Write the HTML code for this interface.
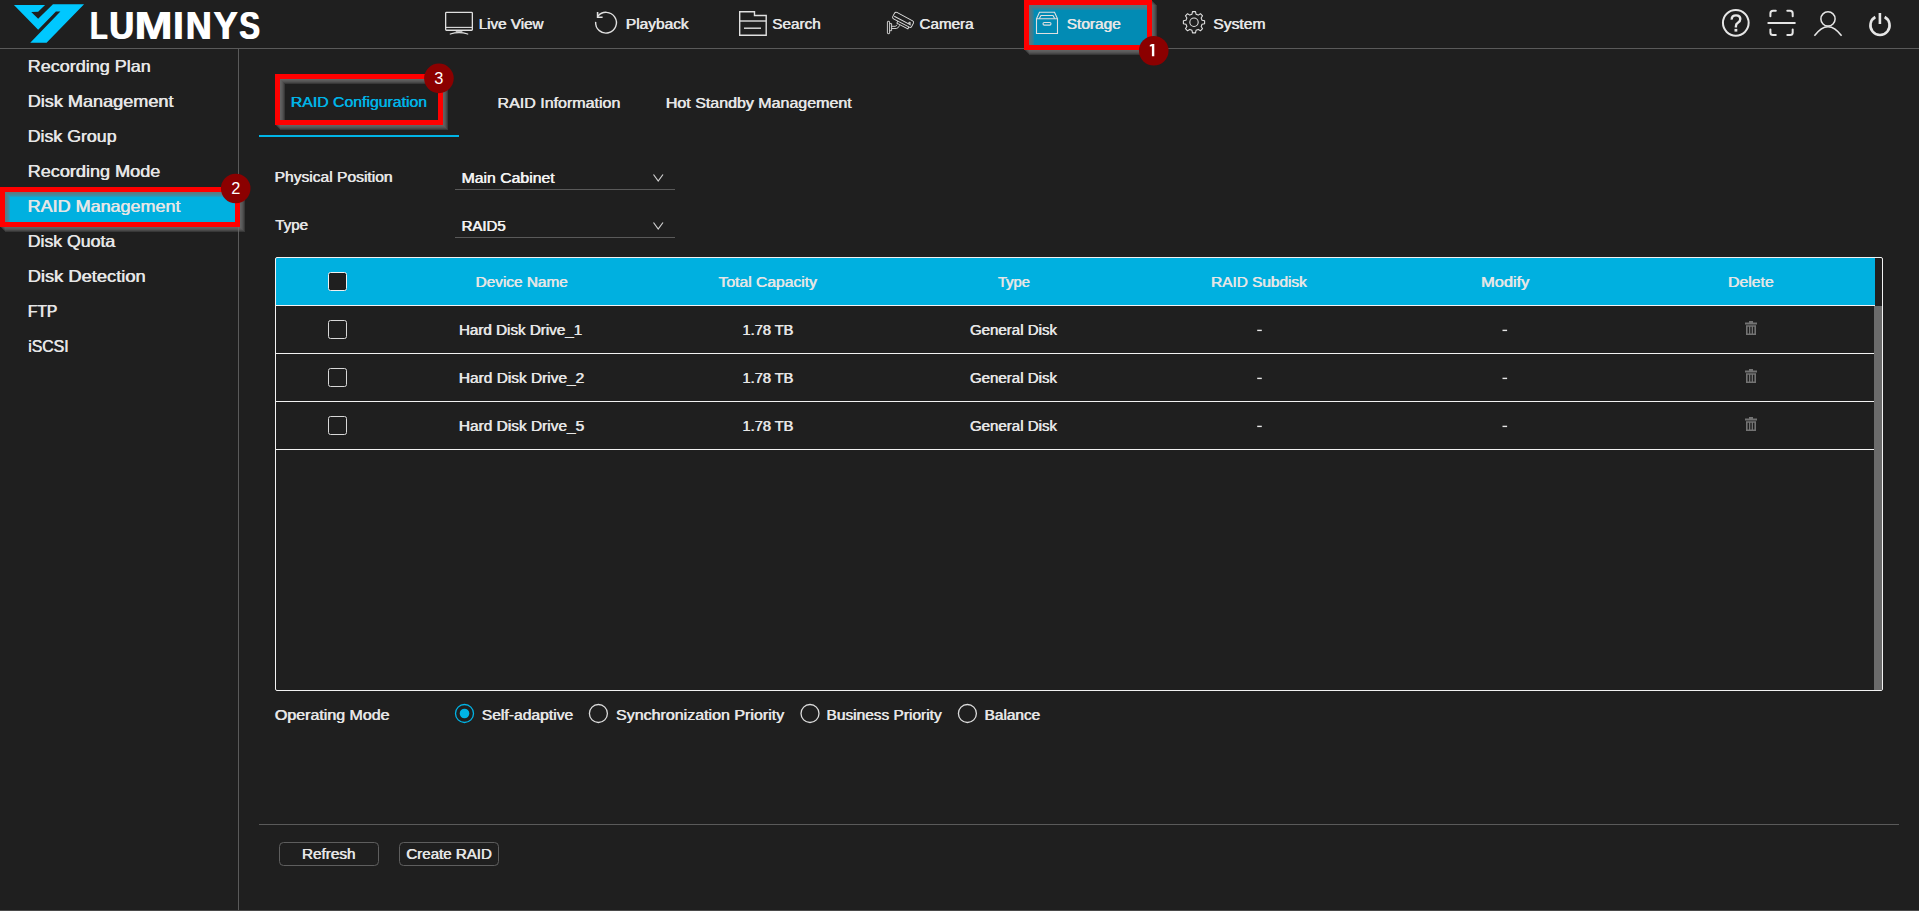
<!DOCTYPE html>
<html><head><meta charset="utf-8"><title>Storage - RAID Management</title>
<style>
html,body{margin:0;padding:0;background:#1f1f1f;overflow:hidden;}
svg{display:block;font-family:"Liberation Sans",sans-serif;}
</style></head>
<body>
<svg width="1919" height="911" viewBox="0 0 1919 911">
<defs>
<filter id="bl" x="-10%" y="-30%" width="130%" height="170%"><feGaussianBlur stdDeviation="0.5"/></filter>
<filter id="sh" x="-10%" y="-30%" width="130%" height="170%">
<feGaussianBlur in="SourceAlpha" stdDeviation="1.3"/>
<feOffset dx="4" dy="4" result="o"/>
<feFlood flood-color="#6a6a6a" flood-opacity="0.9"/>
<feComposite in2="o" operator="in"/>
<feMerge><feMergeNode/><feMergeNode in="SourceGraphic"/></feMerge>
</filter>
</defs>
<rect width="1919" height="911" fill="#1f1f1f"/>

<rect x="0" y="48" width="1919" height="1" fill="#5a5a5a"/>
<rect x="238" y="49" width="1" height="862" fill="#5a5a5a"/>
<rect x="0" y="910" width="1919" height="1" fill="#4a4a4a"/>
<polygon fill="#00c8ff" points="13.95,4.94 45.06,4.94 38.15,11.85 31.23,12.10 38.15,18.77 52.96,4.20 84.07,4.20 46.54,42.72 30.25,42.72 60.37,11.60 55.93,11.60 38.15,29.63"/>
<rect x="1029" y="5" width="118" height="40" fill="#028bb4"/>
<rect x="5" y="192" width="230" height="30" fill="#00b0e0"/>
<rect x="259" y="135" width="200" height="2" fill="#00b4e6"/>
<rect x="455" y="189" width="220" height="1" fill="#5a5a5a"/>
<rect x="455" y="237" width="220" height="1" fill="#5a5a5a"/>
<path d="M653.5 174.5 L658.2 181 L663 174.5" fill="none" stroke="#cfcfcf" stroke-width="1.2"/>
<path d="M653.5 222.5 L658.2 229 L663 222.5" fill="none" stroke="#cfcfcf" stroke-width="1.2"/>
<rect x="276" y="258" width="1599" height="47" fill="#00b0e0"/>
<rect x="275.5" y="257.5" width="1607" height="433" rx="1.5" fill="none" stroke="#f2f2f2" stroke-width="1"/>
<rect x="276" y="305" width="1599" height="1" fill="#f2f2f2"/>
<rect x="276" y="353" width="1599" height="1" fill="#f2f2f2"/>
<rect x="276" y="401" width="1599" height="1" fill="#f2f2f2"/>
<rect x="276" y="449" width="1599" height="1" fill="#f2f2f2"/>
<rect x="1874" y="306" width="8" height="384" fill="#6b6b6b"/>
<rect x="328.5" y="272.5" width="18" height="18" rx="2" fill="#1f1f1f" stroke="#f0f0f0" stroke-width="1"/>
<rect x="328.5" y="320.5" width="18" height="18" rx="2" fill="none" stroke="#d8d8d8" stroke-width="1"/>
<rect x="1257.2" y="329.7" width="4.6" height="1.4" fill="#e6e6e6"/>
<rect x="1502.5" y="329.7" width="4.6" height="1.4" fill="#e6e6e6"/>
<g transform="translate(1745,321)" fill="#737373"><rect x="4" y="0" width="4" height="2"/><rect x="0" y="1.5" width="12" height="2"/><path d="M1 4.2 H11 V14 H1 Z M2.6 5.8 V12.6 H4 V5.8 Z M5.3 5.8 V12.6 H6.7 V5.8 Z M8 5.8 V12.6 H9.4 V5.8 Z" fill-rule="evenodd"/></g>
<rect x="328.5" y="368.5" width="18" height="18" rx="2" fill="none" stroke="#d8d8d8" stroke-width="1"/>
<rect x="1257.2" y="377.7" width="4.6" height="1.4" fill="#e6e6e6"/>
<rect x="1502.5" y="377.7" width="4.6" height="1.4" fill="#e6e6e6"/>
<g transform="translate(1745,369)" fill="#737373"><rect x="4" y="0" width="4" height="2"/><rect x="0" y="1.5" width="12" height="2"/><path d="M1 4.2 H11 V14 H1 Z M2.6 5.8 V12.6 H4 V5.8 Z M5.3 5.8 V12.6 H6.7 V5.8 Z M8 5.8 V12.6 H9.4 V5.8 Z" fill-rule="evenodd"/></g>
<rect x="328.5" y="416.5" width="18" height="18" rx="2" fill="none" stroke="#d8d8d8" stroke-width="1"/>
<rect x="1257.2" y="425.7" width="4.6" height="1.4" fill="#e6e6e6"/>
<rect x="1502.5" y="425.7" width="4.6" height="1.4" fill="#e6e6e6"/>
<g transform="translate(1745,417)" fill="#737373"><rect x="4" y="0" width="4" height="2"/><rect x="0" y="1.5" width="12" height="2"/><path d="M1 4.2 H11 V14 H1 Z M2.6 5.8 V12.6 H4 V5.8 Z M5.3 5.8 V12.6 H6.7 V5.8 Z M8 5.8 V12.6 H9.4 V5.8 Z" fill-rule="evenodd"/></g>
<circle cx="464.5" cy="713.5" r="9" fill="none" stroke="#00b4e6" stroke-width="1.3"/>
<circle cx="464.5" cy="713.5" r="4.8" fill="#00b4e6"/>
<circle cx="598.4" cy="713.5" r="9" fill="none" stroke="#dcdcdc" stroke-width="1.3"/>
<circle cx="810" cy="713.5" r="9" fill="none" stroke="#dcdcdc" stroke-width="1.3"/>
<circle cx="967.4" cy="713.5" r="9" fill="none" stroke="#dcdcdc" stroke-width="1.3"/>
<rect x="259" y="824" width="1640" height="1" fill="#5a5a5a"/>
<rect x="279.5" y="842.5" width="99" height="23" rx="4" fill="none" stroke="#5e5e5e" stroke-width="1"/>
<rect x="399.5" y="842.5" width="99" height="23" rx="4" fill="none" stroke="#5e5e5e" stroke-width="1"/>
<g fill="none" stroke="#e0e0e0" stroke-width="1.3"><rect x="445.65" y="12.45" width="26.7" height="17.8" rx="0.8"/><line x1="446" y1="27.4" x2="472" y2="27.4" stroke-width="1.1"/></g><rect x="455.7" y="30.5" width="6.7" height="1.8" fill="#e0e0e0" opacity="0.8"/><path d="M450.3 34 Q459 31.2 467.7 34" fill="none" stroke="#e0e0e0" stroke-width="1.3" stroke-linecap="round"/>
<g fill="none" stroke="#e0e0e0" stroke-width="1.4"><path d="M595.64 21.89 A10.4 10.4 0 1 0 597.9 16.2"/><path d="M597.6 12 V17.3 H602.6" stroke-width="1.6"/></g>
<g fill="none" stroke="#e0e0e0" stroke-width="1.4"><path d="M739.7 35.2 V11.7 H754.5 V15.5 H766.2 V35.2 Z"/><line x1="739.7" y1="21" x2="766.2" y2="21"/><line x1="744" y1="28.2" x2="761" y2="28.2"/></g>
<g fill="none" stroke="#e0e0e0" stroke-width="0.9"><g transform="translate(1 1) rotate(28 902 19)"><rect x="891.3" y="15.2" width="21.4" height="7.2" rx="1.8"/><line x1="892.5" y1="19.8" x2="911.5" y2="19.8"/><path d="M898 22.4 V24.6 H910.5 V22.4"/><circle cx="909.2" cy="18.6" r="0.8"/></g><rect x="887.4" y="21.3" width="2.2" height="12.4" rx="0.6"/><path d="M889.6 23.6 H891.6 V30.7 H889.6"/><path d="M891.6 28.5 H896.3 Q898.6 28.2 899.6 25.3 M891.6 26.3 H895.2 Q896.5 26 897.2 24.6"/></g>
<g fill="none" stroke="#e0e0e0" stroke-width="1.1"><path d="M1036.5 33.5 V18.8 H1057.5 V33.5 Z"/><path d="M1036.5 18.8 L1039.5 12.3 H1054.5 L1057.5 18.8"/><path d="M1039.3 18.5 L1041 15.5 H1053 L1054.7 18.5"/><rect x="1043" y="22.5" width="8" height="2.6" rx="1.3"/></g>
<g fill="none" stroke="#e0e0e0" stroke-width="1.1"><path d="M1202.04 20.20 L1204.60 20.76 L1204.60 23.74 L1202.04 24.30 L1201.14 26.48 L1202.55 28.69 L1200.44 30.80 L1198.23 29.39 L1196.05 30.29 L1195.49 32.85 L1192.51 32.85 L1191.95 30.29 L1189.77 29.39 L1187.56 30.80 L1185.45 28.69 L1186.86 26.48 L1185.96 24.30 L1183.40 23.74 L1183.40 20.76 L1185.96 20.20 L1186.86 18.02 L1185.45 15.81 L1187.56 13.70 L1189.77 15.11 L1191.95 14.21 L1192.51 11.65 L1195.49 11.65 L1196.05 14.21 L1198.23 15.11 L1200.44 13.70 L1202.55 15.81 L1201.14 18.02 Z" stroke-linejoin="round"/><circle cx="1194" cy="22.25" r="4.2"/></g>
<circle cx="1735.8" cy="22.85" r="12.85" fill="none" stroke="#e6e6e6" stroke-width="2"/>
<path d="M1731.7 19.6 Q1731.6 15.4 1736 15.4 Q1740.3 15.4 1740.3 19.1 Q1740.3 21.4 1737.9 22.7 Q1735.9 23.8 1735.9 26.2 V27.4" fill="none" stroke="#e6e6e6" stroke-width="2.4"/>
<rect x="1734.5" y="28.9" width="2.8" height="2.7" fill="#e6e6e6"/>
<g fill="none" stroke="#e6e6e6" stroke-width="2" stroke-linecap="round"><path d="M1770.4 16.2 V13.4 Q1770.4 10.8 1773 10.8 H1775.8"/><path d="M1787.3 10.8 H1790.1 Q1792.7 10.8 1792.7 13.4 V16.2"/><path d="M1770.4 29.6 V32.5 Q1770.4 35.1 1773 35.1 H1775.8"/><path d="M1787.3 35.1 H1790.1 Q1792.7 35.1 1792.7 32.5 V29.6"/><path d="M1768.3 22.9 H1794.8"/></g>
<g fill="none" stroke="#e6e6e6" stroke-width="1.5"><circle cx="1828" cy="18.9" r="7.1"/><path d="M1814.4 35.8 Q1828 17.6 1841.6 35.8"/></g>
<g fill="none" stroke="#e6e6e6" stroke-width="2.6"><path d="M1875.35 17.0 A9.6 9.6 0 1 0 1884.65 17.0"/><line x1="1879.9" y1="13.0" x2="1879.9" y2="24.0"/></g>
<text x="89.50" y="39" font-size="38" font-weight="bold" fill="#ffffff" textLength="17.44" lengthAdjust="spacingAndGlyphs">L</text><text x="90.70" y="39" font-size="38" font-weight="bold" fill="#ffffff" textLength="17.44" lengthAdjust="spacingAndGlyphs">L</text>
<text x="108.82" y="39" font-size="38" font-weight="bold" fill="#ffffff" textLength="24.71" lengthAdjust="spacingAndGlyphs">U</text><text x="110.02" y="39" font-size="38" font-weight="bold" fill="#ffffff" textLength="24.71" lengthAdjust="spacingAndGlyphs">U</text>
<text x="133.93" y="39" font-size="38" font-weight="bold" fill="#ffffff" textLength="38.07" lengthAdjust="spacingAndGlyphs">M</text><text x="135.13" y="39" font-size="38" font-weight="bold" fill="#ffffff" textLength="38.07" lengthAdjust="spacingAndGlyphs">M</text>
<text x="172.72" y="39" font-size="38" font-weight="bold" fill="#ffffff" textLength="10.14" lengthAdjust="spacingAndGlyphs">I</text><text x="173.92" y="39" font-size="38" font-weight="bold" fill="#ffffff" textLength="10.14" lengthAdjust="spacingAndGlyphs">I</text>
<text x="185.26" y="39" font-size="38" font-weight="bold" fill="#ffffff" textLength="25.78" lengthAdjust="spacingAndGlyphs">N</text><text x="186.46" y="39" font-size="38" font-weight="bold" fill="#ffffff" textLength="25.78" lengthAdjust="spacingAndGlyphs">N</text>
<text x="212.90" y="39" font-size="38" font-weight="bold" fill="#ffffff" textLength="24.32" lengthAdjust="spacingAndGlyphs">Y</text><text x="214.10" y="39" font-size="38" font-weight="bold" fill="#ffffff" textLength="24.32" lengthAdjust="spacingAndGlyphs">Y</text>
<text x="238.77" y="39" font-size="38" font-weight="bold" fill="#ffffff" textLength="20.55" lengthAdjust="spacingAndGlyphs">S</text><text x="239.97" y="39" font-size="38" font-weight="bold" fill="#ffffff" textLength="20.55" lengthAdjust="spacingAndGlyphs">S</text>
<text x="27.40" y="72" font-size="16.5" font-weight="normal" fill="#e6e6e6" textLength="123.01" lengthAdjust="spacingAndGlyphs">Recording Plan</text><text x="28.00" y="72" font-size="16.5" font-weight="normal" fill="#e6e6e6" textLength="123.01" lengthAdjust="spacingAndGlyphs">Recording Plan</text>
<text x="27.42" y="107" font-size="16.5" font-weight="normal" fill="#e6e6e6" textLength="145.81" lengthAdjust="spacingAndGlyphs">Disk Management</text><text x="28.02" y="107" font-size="16.5" font-weight="normal" fill="#e6e6e6" textLength="145.81" lengthAdjust="spacingAndGlyphs">Disk Management</text>
<text x="27.43" y="142" font-size="16.5" font-weight="normal" fill="#e6e6e6" textLength="88.84" lengthAdjust="spacingAndGlyphs">Disk Group</text><text x="28.03" y="142" font-size="16.5" font-weight="normal" fill="#e6e6e6" textLength="88.84" lengthAdjust="spacingAndGlyphs">Disk Group</text>
<text x="27.43" y="177" font-size="16.5" font-weight="normal" fill="#e6e6e6" textLength="132.57" lengthAdjust="spacingAndGlyphs">Recording Mode</text><text x="28.03" y="177" font-size="16.5" font-weight="normal" fill="#e6e6e6" textLength="132.57" lengthAdjust="spacingAndGlyphs">Recording Mode</text>
<text x="27.38" y="212" font-size="16.5" font-weight="normal" fill="#e6e6e6" textLength="152.87" lengthAdjust="spacingAndGlyphs">RAID Management</text><text x="27.98" y="212" font-size="16.5" font-weight="normal" fill="#e6e6e6" textLength="152.87" lengthAdjust="spacingAndGlyphs">RAID Management</text>
<text x="27.43" y="247" font-size="16.5" font-weight="normal" fill="#e6e6e6" textLength="87.55" lengthAdjust="spacingAndGlyphs">Disk Quota</text><text x="28.03" y="247" font-size="16.5" font-weight="normal" fill="#e6e6e6" textLength="87.55" lengthAdjust="spacingAndGlyphs">Disk Quota</text>
<text x="27.40" y="282" font-size="16.5" font-weight="normal" fill="#e6e6e6" textLength="118.02" lengthAdjust="spacingAndGlyphs">Disk Detection</text><text x="28.00" y="282" font-size="16.5" font-weight="normal" fill="#e6e6e6" textLength="118.02" lengthAdjust="spacingAndGlyphs">Disk Detection</text>
<text x="27.59" y="317" font-size="16.5" font-weight="normal" fill="#e6e6e6" textLength="29.44" lengthAdjust="spacingAndGlyphs">FTP</text><text x="28.19" y="317" font-size="16.5" font-weight="normal" fill="#e6e6e6" textLength="29.44" lengthAdjust="spacingAndGlyphs">FTP</text>
<text x="27.91" y="352" font-size="16.5" font-weight="normal" fill="#e6e6e6" textLength="40.40" lengthAdjust="spacingAndGlyphs">iSCSI</text><text x="28.51" y="352" font-size="16.5" font-weight="normal" fill="#e6e6e6" textLength="40.40" lengthAdjust="spacingAndGlyphs">iSCSI</text>
<text x="478.41" y="29" font-size="14.7" font-weight="normal" fill="#e6e6e6" textLength="64.87" lengthAdjust="spacingAndGlyphs">Live View</text><text x="479.01" y="29" font-size="14.7" font-weight="normal" fill="#e6e6e6" textLength="64.87" lengthAdjust="spacingAndGlyphs">Live View</text>
<text x="625.62" y="29" font-size="14.7" font-weight="normal" fill="#e6e6e6" textLength="62.75" lengthAdjust="spacingAndGlyphs">Playback</text><text x="626.22" y="29" font-size="14.7" font-weight="normal" fill="#e6e6e6" textLength="62.75" lengthAdjust="spacingAndGlyphs">Playback</text>
<text x="772.04" y="29" font-size="14.7" font-weight="normal" fill="#e6e6e6" textLength="48.51" lengthAdjust="spacingAndGlyphs">Search</text><text x="772.64" y="29" font-size="14.7" font-weight="normal" fill="#e6e6e6" textLength="48.51" lengthAdjust="spacingAndGlyphs">Search</text>
<text x="919.29" y="29" font-size="14.7" font-weight="normal" fill="#e6e6e6" textLength="53.95" lengthAdjust="spacingAndGlyphs">Camera</text><text x="919.89" y="29" font-size="14.7" font-weight="normal" fill="#e6e6e6" textLength="53.95" lengthAdjust="spacingAndGlyphs">Camera</text>
<text x="1066.45" y="29" font-size="14.7" font-weight="normal" fill="#e6e6e6" textLength="54.11" lengthAdjust="spacingAndGlyphs">Storage</text><text x="1067.05" y="29" font-size="14.7" font-weight="normal" fill="#e6e6e6" textLength="54.11" lengthAdjust="spacingAndGlyphs">Storage</text>
<text x="1212.99" y="29" font-size="14.7" font-weight="normal" fill="#e6e6e6" textLength="52.28" lengthAdjust="spacingAndGlyphs">System</text><text x="1213.59" y="29" font-size="14.7" font-weight="normal" fill="#e6e6e6" textLength="52.28" lengthAdjust="spacingAndGlyphs">System</text>
<text x="290.59" y="107" font-size="14.7" font-weight="normal" fill="#00b4e6" textLength="136.22" lengthAdjust="spacingAndGlyphs">RAID Configuration</text><text x="291.19" y="107" font-size="14.7" font-weight="normal" fill="#00b4e6" textLength="136.22" lengthAdjust="spacingAndGlyphs">RAID Configuration</text>
<text x="497.22" y="108" font-size="14.7" font-weight="normal" fill="#e6e6e6" textLength="122.88" lengthAdjust="spacingAndGlyphs">RAID Information</text><text x="497.82" y="108" font-size="14.7" font-weight="normal" fill="#e6e6e6" textLength="122.88" lengthAdjust="spacingAndGlyphs">RAID Information</text>
<text x="665.55" y="108" font-size="14.7" font-weight="normal" fill="#e6e6e6" textLength="185.85" lengthAdjust="spacingAndGlyphs">Hot Standby Management</text><text x="666.15" y="108" font-size="14.7" font-weight="normal" fill="#e6e6e6" textLength="185.85" lengthAdjust="spacingAndGlyphs">Hot Standby Management</text>
<text x="274.33" y="182" font-size="14.7" font-weight="normal" fill="#e6e6e6" textLength="117.94" lengthAdjust="spacingAndGlyphs">Physical Position</text><text x="274.93" y="182" font-size="14.7" font-weight="normal" fill="#e6e6e6" textLength="117.94" lengthAdjust="spacingAndGlyphs">Physical Position</text>
<text x="275.01" y="230" font-size="14.7" font-weight="normal" fill="#e6e6e6" textLength="32.75" lengthAdjust="spacingAndGlyphs">Type</text><text x="275.61" y="230" font-size="14.7" font-weight="normal" fill="#e6e6e6" textLength="32.75" lengthAdjust="spacingAndGlyphs">Type</text>
<text x="461.35" y="183" font-size="14.7" font-weight="normal" fill="#f2f2f2" textLength="93.01" lengthAdjust="spacingAndGlyphs">Main Cabinet</text><text x="461.95" y="183" font-size="14.7" font-weight="normal" fill="#f2f2f2" textLength="93.01" lengthAdjust="spacingAndGlyphs">Main Cabinet</text>
<text x="461.30" y="231" font-size="14.7" font-weight="normal" fill="#f2f2f2" textLength="44.06" lengthAdjust="spacingAndGlyphs">RAID5</text><text x="461.90" y="231" font-size="14.7" font-weight="normal" fill="#f2f2f2" textLength="44.06" lengthAdjust="spacingAndGlyphs">RAID5</text>
<text x="475.36" y="287" font-size="14.7" font-weight="normal" fill="#e6e6e6" textLength="92.12" lengthAdjust="spacingAndGlyphs">Device Name</text><text x="475.96" y="287" font-size="14.7" font-weight="normal" fill="#e6e6e6" textLength="92.12" lengthAdjust="spacingAndGlyphs">Device Name</text>
<text x="718.34" y="287" font-size="14.7" font-weight="normal" fill="#e6e6e6" textLength="98.28" lengthAdjust="spacingAndGlyphs">Total Capacity</text><text x="718.94" y="287" font-size="14.7" font-weight="normal" fill="#e6e6e6" textLength="98.28" lengthAdjust="spacingAndGlyphs">Total Capacity</text>
<text x="997.66" y="287" font-size="14.7" font-weight="normal" fill="#e6e6e6" textLength="31.95" lengthAdjust="spacingAndGlyphs">Type</text><text x="998.26" y="287" font-size="14.7" font-weight="normal" fill="#e6e6e6" textLength="31.95" lengthAdjust="spacingAndGlyphs">Type</text>
<text x="1210.81" y="287" font-size="14.7" font-weight="normal" fill="#e6e6e6" textLength="95.68" lengthAdjust="spacingAndGlyphs">RAID Subdisk</text><text x="1211.41" y="287" font-size="14.7" font-weight="normal" fill="#e6e6e6" textLength="95.68" lengthAdjust="spacingAndGlyphs">RAID Subdisk</text>
<text x="1480.83" y="287" font-size="14.7" font-weight="normal" fill="#e6e6e6" textLength="48.24" lengthAdjust="spacingAndGlyphs">Modify</text><text x="1481.43" y="287" font-size="14.7" font-weight="normal" fill="#e6e6e6" textLength="48.24" lengthAdjust="spacingAndGlyphs">Modify</text>
<text x="1727.86" y="287" font-size="14.7" font-weight="normal" fill="#e6e6e6" textLength="45.54" lengthAdjust="spacingAndGlyphs">Delete</text><text x="1728.46" y="287" font-size="14.7" font-weight="normal" fill="#e6e6e6" textLength="45.54" lengthAdjust="spacingAndGlyphs">Delete</text>
<text x="458.67" y="335" font-size="14.7" font-weight="normal" fill="#e6e6e6" textLength="123.21" lengthAdjust="spacingAndGlyphs">Hard Disk Drive_1</text><text x="459.27" y="335" font-size="14.7" font-weight="normal" fill="#e6e6e6" textLength="123.21" lengthAdjust="spacingAndGlyphs">Hard Disk Drive_1</text>
<text x="742.26" y="335" font-size="14.7" font-weight="normal" fill="#e6e6e6" textLength="50.83" lengthAdjust="spacingAndGlyphs">1.78 TB</text><text x="742.86" y="335" font-size="14.7" font-weight="normal" fill="#e6e6e6" textLength="50.83" lengthAdjust="spacingAndGlyphs">1.78 TB</text>
<text x="969.66" y="335" font-size="14.7" font-weight="normal" fill="#e6e6e6" textLength="87.03" lengthAdjust="spacingAndGlyphs">General Disk</text><text x="970.26" y="335" font-size="14.7" font-weight="normal" fill="#e6e6e6" textLength="87.03" lengthAdjust="spacingAndGlyphs">General Disk</text>
<text x="458.62" y="383" font-size="14.7" font-weight="normal" fill="#e6e6e6" textLength="125.34" lengthAdjust="spacingAndGlyphs">Hard Disk Drive_2</text><text x="459.22" y="383" font-size="14.7" font-weight="normal" fill="#e6e6e6" textLength="125.34" lengthAdjust="spacingAndGlyphs">Hard Disk Drive_2</text>
<text x="742.26" y="383" font-size="14.7" font-weight="normal" fill="#e6e6e6" textLength="50.83" lengthAdjust="spacingAndGlyphs">1.78 TB</text><text x="742.86" y="383" font-size="14.7" font-weight="normal" fill="#e6e6e6" textLength="50.83" lengthAdjust="spacingAndGlyphs">1.78 TB</text>
<text x="969.66" y="383" font-size="14.7" font-weight="normal" fill="#e6e6e6" textLength="87.03" lengthAdjust="spacingAndGlyphs">General Disk</text><text x="970.26" y="383" font-size="14.7" font-weight="normal" fill="#e6e6e6" textLength="87.03" lengthAdjust="spacingAndGlyphs">General Disk</text>
<text x="458.62" y="431" font-size="14.7" font-weight="normal" fill="#e6e6e6" textLength="125.30" lengthAdjust="spacingAndGlyphs">Hard Disk Drive_5</text><text x="459.22" y="431" font-size="14.7" font-weight="normal" fill="#e6e6e6" textLength="125.30" lengthAdjust="spacingAndGlyphs">Hard Disk Drive_5</text>
<text x="742.26" y="431" font-size="14.7" font-weight="normal" fill="#e6e6e6" textLength="50.83" lengthAdjust="spacingAndGlyphs">1.78 TB</text><text x="742.86" y="431" font-size="14.7" font-weight="normal" fill="#e6e6e6" textLength="50.83" lengthAdjust="spacingAndGlyphs">1.78 TB</text>
<text x="969.66" y="431" font-size="14.7" font-weight="normal" fill="#e6e6e6" textLength="87.03" lengthAdjust="spacingAndGlyphs">General Disk</text><text x="970.26" y="431" font-size="14.7" font-weight="normal" fill="#e6e6e6" textLength="87.03" lengthAdjust="spacingAndGlyphs">General Disk</text>
<text x="274.62" y="720" font-size="14.7" font-weight="normal" fill="#e6e6e6" textLength="114.63" lengthAdjust="spacingAndGlyphs">Operating Mode</text><text x="275.22" y="720" font-size="14.7" font-weight="normal" fill="#e6e6e6" textLength="114.63" lengthAdjust="spacingAndGlyphs">Operating Mode</text>
<text x="481.44" y="720" font-size="14.7" font-weight="normal" fill="#e6e6e6" textLength="91.52" lengthAdjust="spacingAndGlyphs">Self-adaptive</text><text x="482.04" y="720" font-size="14.7" font-weight="normal" fill="#e6e6e6" textLength="91.52" lengthAdjust="spacingAndGlyphs">Self-adaptive</text>
<text x="615.72" y="720" font-size="14.7" font-weight="normal" fill="#e6e6e6" textLength="168.19" lengthAdjust="spacingAndGlyphs">Synchronization Priority</text><text x="616.32" y="720" font-size="14.7" font-weight="normal" fill="#e6e6e6" textLength="168.19" lengthAdjust="spacingAndGlyphs">Synchronization Priority</text>
<text x="826.22" y="720" font-size="14.7" font-weight="normal" fill="#e6e6e6" textLength="115.18" lengthAdjust="spacingAndGlyphs">Business Priority</text><text x="826.82" y="720" font-size="14.7" font-weight="normal" fill="#e6e6e6" textLength="115.18" lengthAdjust="spacingAndGlyphs">Business Priority</text>
<text x="984.34" y="720" font-size="14.7" font-weight="normal" fill="#e6e6e6" textLength="55.54" lengthAdjust="spacingAndGlyphs">Balance</text><text x="984.94" y="720" font-size="14.7" font-weight="normal" fill="#e6e6e6" textLength="55.54" lengthAdjust="spacingAndGlyphs">Balance</text>
<text x="301.66" y="859" font-size="14.7" font-weight="normal" fill="#e6e6e6" textLength="53.62" lengthAdjust="spacingAndGlyphs">Refresh</text><text x="302.26" y="859" font-size="14.7" font-weight="normal" fill="#e6e6e6" textLength="53.62" lengthAdjust="spacingAndGlyphs">Refresh</text>
<text x="406.10" y="859" font-size="14.7" font-weight="normal" fill="#e6e6e6" textLength="85.51" lengthAdjust="spacingAndGlyphs">Create RAID</text><text x="406.70" y="859" font-size="14.7" font-weight="normal" fill="#e6e6e6" textLength="85.51" lengthAdjust="spacingAndGlyphs">Create RAID</text>
<g class="ann"><g filter="url(#bl)"><path transform="translate(1 1)" fill="#707070" fill-opacity="0.3" fill-rule="evenodd" d="M1024 0 h128 v50 h-128 Z M1029 5 v40 h118 v-40 Z"/><path transform="translate(2 2)" fill="#707070" fill-opacity="0.3" fill-rule="evenodd" d="M1024 0 h128 v50 h-128 Z M1029 5 v40 h118 v-40 Z"/><path transform="translate(3 3)" fill="#707070" fill-opacity="0.3" fill-rule="evenodd" d="M1024 0 h128 v50 h-128 Z M1029 5 v40 h118 v-40 Z"/><path transform="translate(4 4)" fill="#707070" fill-opacity="0.3" fill-rule="evenodd" d="M1024 0 h128 v50 h-128 Z M1029 5 v40 h118 v-40 Z"/><path transform="translate(5 5)" fill="#707070" fill-opacity="0.3" fill-rule="evenodd" d="M1024 0 h128 v50 h-128 Z M1029 5 v40 h118 v-40 Z"/></g><path fill="#ff0000" fill-rule="evenodd" d="M1024 0 h128 v50 h-128 Z M1029 5 v40 h118 v-40 Z"/></g>
<g class="ann"><g filter="url(#bl)"><path transform="translate(1 1)" fill="#707070" fill-opacity="0.3" fill-rule="evenodd" d="M0 187 h240 v40 h-240 Z M5 192 v30 h230 v-30 Z"/><path transform="translate(2 2)" fill="#707070" fill-opacity="0.3" fill-rule="evenodd" d="M0 187 h240 v40 h-240 Z M5 192 v30 h230 v-30 Z"/><path transform="translate(3 3)" fill="#707070" fill-opacity="0.3" fill-rule="evenodd" d="M0 187 h240 v40 h-240 Z M5 192 v30 h230 v-30 Z"/><path transform="translate(4 4)" fill="#707070" fill-opacity="0.3" fill-rule="evenodd" d="M0 187 h240 v40 h-240 Z M5 192 v30 h230 v-30 Z"/><path transform="translate(5 5)" fill="#707070" fill-opacity="0.3" fill-rule="evenodd" d="M0 187 h240 v40 h-240 Z M5 192 v30 h230 v-30 Z"/></g><path fill="#ff0000" fill-rule="evenodd" d="M0 187 h240 v40 h-240 Z M5 192 v30 h230 v-30 Z"/></g>
<g class="ann"><g filter="url(#bl)"><path transform="translate(1 1)" fill="#707070" fill-opacity="0.3" fill-rule="evenodd" d="M275 74 h168 v51 h-168 Z M280 79 v41 h158 v-41 Z"/><path transform="translate(2 2)" fill="#707070" fill-opacity="0.3" fill-rule="evenodd" d="M275 74 h168 v51 h-168 Z M280 79 v41 h158 v-41 Z"/><path transform="translate(3 3)" fill="#707070" fill-opacity="0.3" fill-rule="evenodd" d="M275 74 h168 v51 h-168 Z M280 79 v41 h158 v-41 Z"/><path transform="translate(4 4)" fill="#707070" fill-opacity="0.3" fill-rule="evenodd" d="M275 74 h168 v51 h-168 Z M280 79 v41 h158 v-41 Z"/><path transform="translate(5 5)" fill="#707070" fill-opacity="0.3" fill-rule="evenodd" d="M275 74 h168 v51 h-168 Z M280 79 v41 h158 v-41 Z"/></g><path fill="#ff0000" fill-rule="evenodd" d="M275 74 h168 v51 h-168 Z M280 79 v41 h158 v-41 Z"/></g>
<circle cx="1153.75" cy="50.7" r="14.8" fill="#8b0000"/><path fill="#fff" d="M1151.9 43.9 H1154.3 V56.2 H1151.9 V46.2 L1149.8 46.6 V45.0 Z"/><circle cx="235.7" cy="188.45" r="14.8" fill="#8b0000"/><text x="235.7" y="194.1" font-size="16.4" font-weight="normal" fill="#ffffff" text-anchor="middle">2</text><circle cx="438.9" cy="78.35" r="14.8" fill="#8b0000"/><text x="438.9" y="84.0" font-size="16.4" font-weight="normal" fill="#ffffff" text-anchor="middle">3</text>
</svg>
</body></html>
